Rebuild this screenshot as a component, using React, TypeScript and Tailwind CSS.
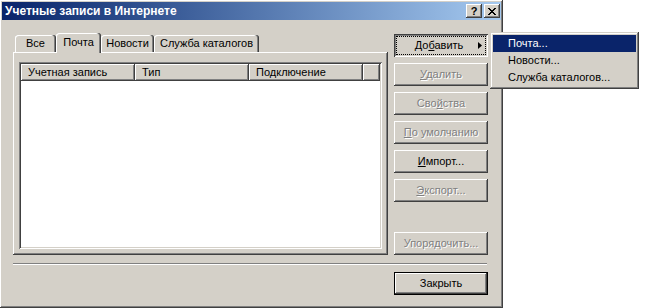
import React from 'react';

const raised =
  'shadow-[inset_-1px_-1px_#404040,inset_1px_1px_#ffffff,inset_-2px_-2px_#808080,inset_2px_2px_#d4d0c8]';

function Btn({
  children,
  disabled,
  className = '',
}: {
  children: React.ReactNode;
  disabled?: boolean;
  className?: string;
}) {
  return (
    <div
      className={`flex h-[23px] w-[94px] items-center justify-center bg-[#d4d0c8] ${raised} ${
        disabled ? 'text-[#808080] [text-shadow:1px_1px_0_#ffffff]' : 'text-black'
      } ${className}`}
    >
      {children}
    </div>
  );
}

function Tab({ label, w, active }: { label: string; w: string; active?: boolean }) {
  return (
    <div
      className={`relative flex items-center justify-center rounded-t-[3px] bg-[#d4d0c8] shadow-[inset_-1px_0_#404040,inset_-2px_0_#808080,inset_1px_1px_#ffffff] ${w} ${
        active ? 'z-10 -mb-[1px] h-[20px] pb-[2px]' : 'h-[17px]'
      }`}
    >
      {label}
    </div>
  );
}

function HeaderCell({ label, w }: { label: string; w: string }) {
  return (
    <div
      className={`flex h-[17px] items-center pl-[7px] shadow-[inset_-1px_-1px_#404040,inset_1px_1px_#ffffff,inset_-2px_-2px_#808080] ${w}`}
    >
      {label}
    </div>
  );
}

export default function App() {
  return (
    <div className="relative flex h-[308px] w-[650px] bg-white font-['Liberation_Sans',Arial,sans-serif] text-[11px] text-black">
      {/* dialog window */}
      <div className="flex h-[308px] w-[503px] flex-col bg-[#d4d0c8] p-[2px] shadow-[inset_-1px_-1px_#404040,inset_1px_1px_#ffffff,inset_-2px_-2px_#808080]">
        {/* title bar */}
        <div className="flex h-[18px] items-center bg-gradient-to-r from-[#0a246a] to-[#a6caf0] pl-[3px] pr-[1px]">
          <span className="flex-1 text-[12px] font-bold text-white">Учетные записи в Интернете</span>
          <div className="flex gap-[2px]">
            <div className={`flex h-[14px] w-[16px] items-center justify-center bg-[#d4d0c8] text-[11px] font-bold leading-none ${raised}`}>
              ?
            </div>
            <div className={`flex h-[14px] w-[16px] items-center justify-center bg-[#d4d0c8] ${raised}`}>
              <svg width="8" height="7" viewBox="0 0 8 7" shapeRendering="crispEdges">
                <path d="M0 0h2v1h-2zM6 0h2v1h-2zM1 1h2v1h-2zM5 1h2v1h-2zM2 2h4v1h-4zM3 3h2v1h-2zM2 4h4v1h-4zM1 5h2v1h-2zM5 5h2v1h-2zM0 6h2v1h-2zM6 6h2v1h-2z" fill="#000" />
              </svg>
            </div>
          </div>
        </div>

        {/* body */}
        <div className="flex flex-col pl-[11px] pt-[13px]">
          <div className="flex items-start gap-[6px]">
            {/* tab control */}
            <div className="flex w-[375px] flex-col">
              <div className="flex h-[19px] items-end pl-[2px]">
                <Tab label="Все" w="w-[41px]" />
                <Tab label="Почта" w="w-[45px]" active />
                <Tab label="Новости" w="w-[53px]" />
                <Tab label="Служба каталогов" w="w-[105px]" />
              </div>
              <div className="h-[203px] bg-[#d4d0c8] px-[6px] pb-[6px] pt-[10px] shadow-[inset_-1px_-1px_#404040,inset_1px_1px_#ffffff,inset_-2px_-2px_#808080]">
                <div className="h-full w-full bg-white p-[2px] shadow-[inset_1px_1px_#808080,inset_-1px_-1px_#ffffff,inset_2px_2px_#404040,inset_-2px_-2px_#d4d0c8]">
                  <div className="flex bg-[#d4d0c8]">
                    <HeaderCell label="Учетная запись" w="w-[114px]" />
                    <HeaderCell label="Тип" w="w-[114px]" />
                    <HeaderCell label="Подключение" w="w-[114px]" />
                    <HeaderCell label="" w="flex-1" />
                  </div>
                </div>
              </div>
            </div>

            {/* buttons */}
            <div className="mt-[1px] flex flex-col gap-[6px]">
              <div className="relative flex h-[23px] w-[94px] items-center justify-center bg-[#d4d0c8] pr-[4px] shadow-[inset_1px_1px_#404040,inset_-1px_-1px_#ffffff,inset_2px_2px_#808080]">
                <div className="absolute inset-[2px] border border-dotted border-black" />
                <span>
                  До<u>б</u>авить
                </span>
                <svg className="absolute right-[6px] top-[8px]" width="4" height="7" viewBox="0 0 4 7">
                  <path d="M0 0L4 3.5L0 7Z" fill="#000" />
                </svg>
              </div>
              <Btn disabled>
                <span>
                  <u>У</u>далить
                </span>
              </Btn>
              <Btn disabled>
                <span>
                  Сво<u>й</u>ства
                </span>
              </Btn>
              <Btn disabled>
                <span>
                  <u>П</u>о умолчанию
                </span>
              </Btn>
              <Btn>
                <span>
                  <u>И</u>мпорт...
                </span>
              </Btn>
              <Btn disabled>
                <span>
                  <u>Э</u>кспорт...
                </span>
              </Btn>
              <Btn disabled className="mt-[24px]">
                <span>
                  Упоря<u>д</u>очить...
                </span>
              </Btn>
            </div>
          </div>

          {/* separator */}
          <div className="mt-[8px] h-[2px] w-[474px] border-t border-b border-t-[#808080] border-b-white" />

          <div className="mt-[7px] flex w-[475px] justify-end">
            <div className="border border-black">
              <div className={`flex h-[21px] w-[92px] items-center justify-center bg-[#d4d0c8] ${raised}`}>
                Закрыть
              </div>
            </div>
          </div>
        </div>
      </div>

      {/* popup menu */}
      <div className="absolute left-[490px] top-[32px] flex w-[149px] flex-col bg-[#d4d0c8] p-[3px] shadow-[inset_-1px_-1px_#404040,inset_1px_1px_#d4d0c8,inset_-2px_-2px_#808080,inset_2px_2px_#ffffff]">
        <div className="flex h-[17px] items-center bg-[#0a246a] pl-[15px] text-white">Почта...</div>
        <div className="flex h-[17px] items-center pl-[15px]">Новости...</div>
        <div className="flex h-[17px] items-center pl-[15px]">Служба каталогов...</div>
      </div>
    </div>
  );
}
